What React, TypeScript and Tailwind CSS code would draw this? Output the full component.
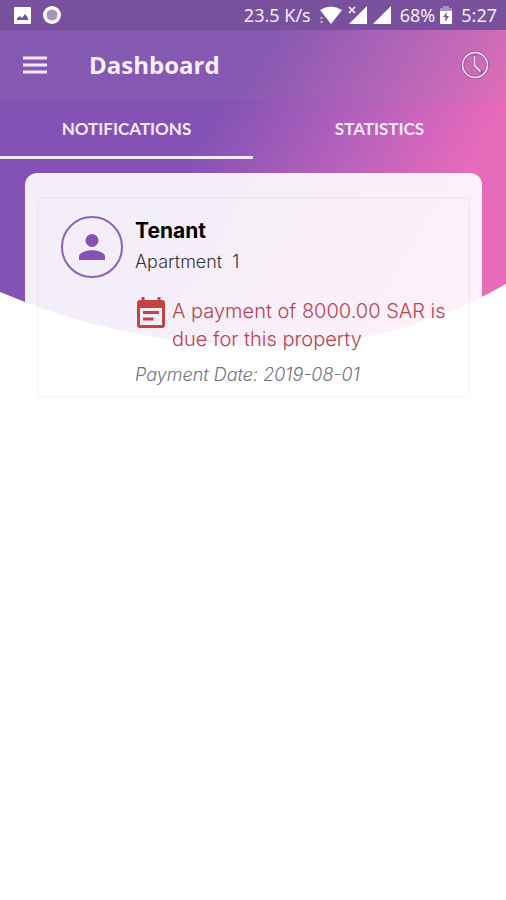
import { useState } from 'react'

type NotificationType = {
  role: string
  unit: string
  message: string
  date: string
}

const notifications: NotificationType[] = [
  {
    role: 'Tenant',
    unit: 'Apartment  1',
    message: 'A payment of 8000.00 SAR is due for this property',
    date: '2019-08-01',
  },
]

const tabs = ['NOTIFICATIONS', 'STATISTICS']

function HeaderBackground() {
  return (
    <svg
      className="absolute inset-x-0 top-0 h-[346px] w-full"
      viewBox="0 0 506 346"
      preserveAspectRatio="none"
      aria-hidden="true"
    >
      <defs>
        <linearGradient id="header" gradientUnits="userSpaceOnUse" x1="200" y1="144" x2="406" y2="268">
          <stop offset="0" stopColor="#8452b5" />
          <stop offset="0.5" stopColor="#b360bb" />
          <stop offset="1" stopColor="#e76abb" />
        </linearGradient>
      </defs>
      <path d="M0 0H506V284Q398 346 270 346Q126 346 0 292Z" fill="url(#header)" />
    </svg>
  )
}

function StatusBar() {
  return (
    <div className="flex h-[30px] items-center justify-between bg-[#78509b] pl-[14px] pr-[9px] text-[18px] text-[#f3ebf8]">
      <div className="flex items-center gap-3">
        <svg width="17" height="17" viewBox="0 0 17 17" aria-hidden="true">
          <rect width="17" height="17" rx="1" fill="#fff" />
          <path d="M3 13V11L6 9L8 11L11 7L14 11V13Z" fill="#78509b" />
        </svg>
        <svg width="18" height="18" viewBox="0 0 18 18" aria-hidden="true">
          <circle cx="9" cy="9" r="9" fill="#fff" />
          <circle cx="9" cy="9" r="5.5" fill="#a594b8" />
        </svg>
      </div>
      <div className="flex items-center">
        <span>23.5 K/s</span>
        <svg className="ml-[9px]" width="22" height="18" viewBox="0 0 22 18" aria-hidden="true">
          <path d="M0 4Q11 -3 22 4L11 18Z" fill="#fff" />
          <path d="M1.5 11V17" stroke="#c9b6da" strokeWidth="2" strokeDasharray="2 2" />
        </svg>
        <svg className="ml-[6px]" width="19" height="18" viewBox="0 0 19 18" aria-hidden="true">
          <path d="M19 0V18H1Z" fill="#fff" />
          <path d="M1 1L7 7M7 1L1 7" stroke="#fff" strokeWidth="1.5" />
        </svg>
        <svg className="ml-[6px]" width="18" height="18" viewBox="0 0 18 18" aria-hidden="true">
          <path d="M18 0V18H0Z" fill="#fff" />
        </svg>
        <span className="ml-[9px]">68%</span>
        <svg className="ml-[5px]" width="12" height="18" viewBox="0 0 12 18" aria-hidden="true">
          <path d="M3 0H9V2H12V6H0V2H3Z" fill="#a98fc0" />
          <path d="M0 5H12V17Q12 18 11 18H1Q0 18 0 17Z" fill="#fff" />
          <path d="M7 6L3 11H5.5L5 16L9 10H6.5Z" fill="#78509b" />
        </svg>
        <span className="ml-[9px]">5:27</span>
      </div>
    </div>
  )
}

function AppBar() {
  return (
    <header className="flex h-[69px] items-center bg-[#99999918] pl-[23px] pr-4">
      <button type="button" aria-label="Menu" className="cursor-pointer">
        <svg width="24" height="18" viewBox="0 0 24 18" aria-hidden="true">
          <path d="M0 2H24M0 9H24M0 16H24" stroke="#f4ecf9" strokeWidth="2.8" />
        </svg>
      </button>
      <h1 className="ml-[42px] flex-1 font-['Open_Sans','Noto_Sans',sans-serif] text-[24px] font-bold text-[#f8f1fb]">
        Dashboard
      </h1>
      <button type="button" aria-label="History" className="cursor-pointer">
        <svg width="30" height="30" viewBox="0 0 30 30" fill="none" aria-hidden="true">
          <circle cx="15" cy="15" r="13.7" stroke="#8c5a93" strokeWidth="1" />
          <circle cx="15" cy="15" r="12.4" stroke="#f3d9ef" strokeWidth="1.6" />
          <circle cx="15" cy="15" r="11.1" stroke="#965c99" strokeWidth="0.8" />
          <path d="M14.5 5.5V15.5L22 23" stroke="#8c5a93" strokeWidth="3.4" />
          <path d="M14.5 6V15.5L20.5 21.5" stroke="#f3d9ef" strokeWidth="1.8" />
        </svg>
      </button>
    </header>
  )
}

function PersonIcon() {
  return (
    <svg width="26" height="26" viewBox="0 0 26 26" fill="#8452b5" aria-hidden="true">
      <circle cx="13" cy="6.5" r="6.5" />
      <path d="M0 26V22.5C0 18.5 8.5 16.3 13 16.3S26 18.5 26 22.5V26Z" />
    </svg>
  )
}

function EventNoteIcon() {
  return (
    <svg className="shrink-0" width="28" height="32" viewBox="0 0 28 32" aria-hidden="true">
      <path
        fillRule="evenodd"
        d="M4.5 0H7.5V3H20.5V0H23.5V3H25Q28 3 28 6V28Q28 31 25 31H3Q0 31 0 28V6Q0 3 3 3H4.5ZM3 11V28H25V11Z"
        fill="#c34343"
      />
      <path d="M6 15.5H22M6 22H16.5" stroke="#c34343" strokeWidth="3" />
    </svg>
  )
}

function NotificationCard({ notification }: { notification: NotificationType }) {
  return (
    <li className="flex items-start gap-3 rounded-md border-2 border-[#8888880f] px-[22px] pb-[7px] pt-4">
      <div className="mt-px flex size-[62px] shrink-0 items-center justify-center rounded-full border-2 border-[#8b62b5]">
        <PersonIcon />
      </div>
      <div className="min-w-0 flex-1">
        <h2 className="text-[21px] font-bold leading-8 text-black">{notification.role}</h2>
        <p className="whitespace-pre text-[18px] font-light leading-[30px] text-[#38343c]">{notification.unit}</p>
        <div className="mt-5 flex gap-[7px] pl-[2px]">
          <EventNoteIcon />
          <p className="text-[20px] font-light leading-7 text-[#b84450]">{notification.message}</p>
        </div>
        <p className="mt-2 text-[18px] font-light italic leading-7 text-[#747474]">
          Payment Date: {notification.date}
        </p>
      </div>
    </li>
  )
}

export default function App() {
  const [activeTab, setActiveTab] = useState(0)

  return (
    <div className="relative min-h-screen bg-white font-['Noto_Sans',sans-serif]">
      <HeaderBackground />
      <div className="relative">
        <StatusBar />
        <AppBar />
        <nav className="flex" role="tablist">
          {tabs.map((tab, index) => (
            <button
              key={tab}
              type="button"
              role="tab"
              aria-selected={activeTab === index}
              onClick={() => setActiveTab(index)}
              className={`h-[60px] flex-1 cursor-pointer border-b-[3px] pt-[2px] font-['Lato',sans-serif] text-[17px] font-bold text-[#f6eafa] ${
                activeTab === index ? 'border-[#f2e9f8]' : 'border-transparent'
              }`}
            >
              {tab}
            </button>
          ))}
        </nav>

        <main className="ml-[25px] mr-6 mt-[14px] rounded-t-xl bg-white/90 px-3 pt-6 font-['Inter',sans-serif]">
          {activeTab === 0 && (
            <ul>
              {notifications.map((notification) => (
                <NotificationCard key={notification.date} notification={notification} />
              ))}
            </ul>
          )}
        </main>
      </div>
    </div>
  )
}
